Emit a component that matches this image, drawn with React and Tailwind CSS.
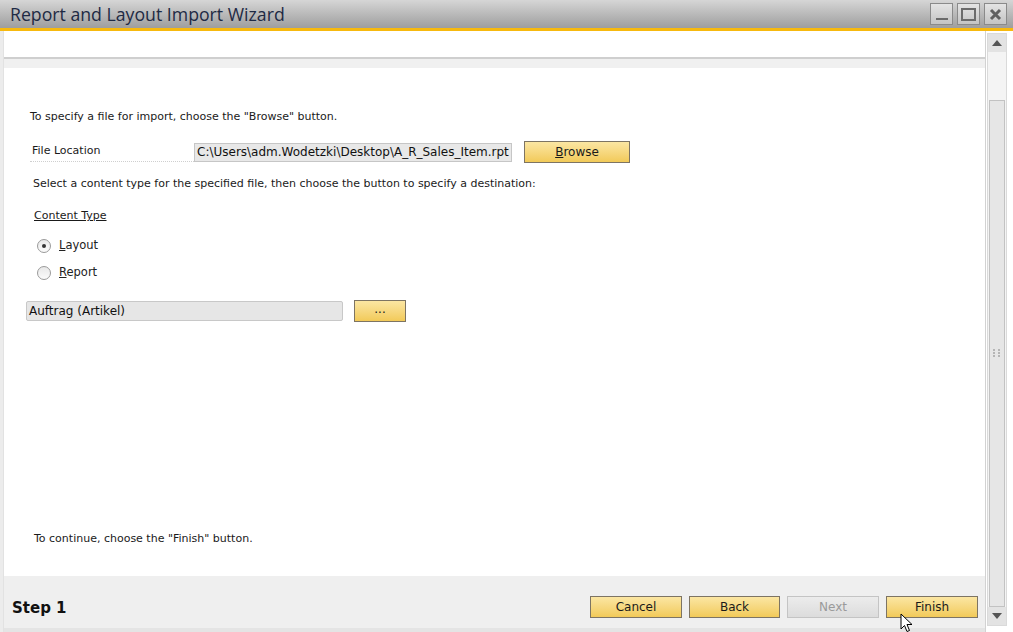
import { useState } from "react";

const font = { fontFamily: "Tahoma, 'DejaVu Sans', 'Liberation Sans', sans-serif" };

function YellowButton({ children, className = "", disabled = false }) {
  return (
    <button
      type="button"
      className={`h-[22px] border text-[12px] flex items-center justify-center ${
        disabled
          ? "border-[#c4c4c4] bg-gradient-to-b from-[#ececec] to-[#dcdcdc] text-[#9a9a9a]"
          : "border-[#7d7463] bg-gradient-to-b from-[#fbe6a2] to-[#f2ca58] text-[#1a1a1a]"
      } ${className}`}
    >
      {children}
    </button>
  );
}

function Radio({ checked, label, accel }) {
  return (
    <label className="flex items-center gap-[8px] h-[18px]">
      <span className="w-[14px] h-[14px] rounded-full border border-[#9a9a9a] bg-gradient-to-b from-[#e8e8e8] to-[#fbfbfb] flex items-center justify-center">
        {checked && <span className="w-[4px] h-[4px] rounded-full bg-[#333]" />}
      </span>
      <span className="text-[11.5px] text-[#222]">
        <span className="underline">{accel}</span>
        {label}
      </span>
    </label>
  );
}

export default function App() {
  const [type, setType] = useState("layout");

  return (
    <div className="w-[1013px] h-[632px] flex flex-col bg-white overflow-hidden relative" style={font}>
      {/* title bar */}
      <div className="h-[28px] flex items-center justify-between bg-gradient-to-b from-[#d6d6d6] to-[#9e9e9e] pl-[10px] pr-[6px]">
        <span className="text-[17.7px] text-[#1e2a44]" style={{ fontFamily: "'Open Sans', 'Noto Sans', sans-serif" }}>
          Report and Layout Import Wizard
        </span>
        <div className="flex gap-[4px]">
          <div className="w-[23px] h-[22px] border border-[#8a8a8a] bg-gradient-to-b from-[#e4e4e4] to-[#c4c4c4] flex items-end justify-center pb-[4px]">
            <span className="w-[12px] h-[2px] bg-[#6b6b6b]" />
          </div>
          <div className="w-[23px] h-[22px] border border-[#8a8a8a] bg-gradient-to-b from-[#e4e4e4] to-[#c4c4c4] flex items-center justify-center">
            <span className="w-[15px] h-[13px] border-2 border-[#6b6b6b]" />
          </div>
          <div className="w-[23px] h-[22px] border border-[#8a8a8a] bg-gradient-to-b from-[#e4e4e4] to-[#c4c4c4] flex items-center justify-center">
            <svg width="13" height="13" viewBox="0 0 13 13">
              <path d="M2 2 L11 11 M11 2 L2 11" stroke="#5f5f5f" strokeWidth="3" />
            </svg>
          </div>
        </div>
      </div>
      <div className="h-[3px] bg-[#f7b90e]" />

      {/* body */}
      <div className="flex-1 flex min-h-0">
        <div className="w-[4px] bg-[#ececec] border-r border-[#e2e2e2]" />
        <div className="flex-1 flex flex-col min-w-0">
          <div className="h-[26px] bg-white" />
          <div className="h-[2px] bg-[#cfcfcf]" />
          <div className="h-[9px] bg-[#f0f0f0]" />

          <div className="flex-1 flex flex-col text-[11px] text-[#1a1a1a] pl-[26px]">
            <p className="mt-[41px] leading-[16px]">To specify a file for import, choose the "Browse" button.</p>

            <div className="mt-[16px] flex items-center">
              <div className="w-[164px] h-[20px] border-b border-dotted border-[#cfcfcf] pl-[2px] flex items-center">File Location</div>
              <div className="w-[318px] h-[19px] bg-[#e8e8e8] border border-[#c6c6c6] flex items-center pl-[2px] text-[12px] text-[#111]">
                C:\Users\adm.Wodetzki\Desktop\A_R_Sales_Item.rpt
              </div>
              <YellowButton className="ml-[12px] w-[106px]">
                <span><span className="underline">B</span>rowse</span>
              </YellowButton>
            </div>

            <p className="mt-[13px] pl-[3px] leading-[16px]">
              Select a content type for the specified file, then choose the button to specify a destination:
            </p>

            <p className="mt-[16px] pl-[4px] leading-[16px] underline">Content Type</p>

            <div className="mt-[13px] pl-[7px] flex flex-col gap-[9px]">
              <div onClick={() => setType("layout")}>
                <Radio checked={type === "layout"} accel="L" label="ayout" />
              </div>
              <div onClick={() => setType("report")}>
                <Radio checked={type === "report"} accel="R" label="eport" />
              </div>
            </div>

            <div className="mt-[18px] ml-[-4px] flex items-center">
              <div className="w-[317px] h-[20px] bg-[#e6e6e6] border border-[#c8c8c8] rounded-[2px] flex items-center pl-[2px] text-[12px] text-[#111]">
                Auftrag (Artikel)
              </div>
              <YellowButton className="ml-[11px] w-[52px] h-[20px] pb-[4px]">...</YellowButton>
            </div>

            <div className="flex-1" />
            <p className="mb-[29px] pl-[4px] leading-[16px]">To continue, choose the "Finish" button.</p>
          </div>

          {/* footer */}
          <div className="h-[52px] bg-[#efefef] flex items-center justify-between pl-[8px] pr-[7px] pt-[14px]">
            <span className="text-[15px] font-bold text-[#111] pb-[2px]" style={{ fontFamily: "Verdana, 'DejaVu Sans', sans-serif" }}>Step 1</span>
            <div className="flex gap-[7px] pb-[4px]">
              <YellowButton className="w-[92px]">Cancel</YellowButton>
              <YellowButton className="w-[91px]">Back</YellowButton>
              <YellowButton className="w-[92px]" disabled>Next</YellowButton>
              <YellowButton className="w-[92px]">Finish</YellowButton>
            </div>
          </div>
          <div className="h-[4px] bg-[#e4e4e4]" />
        </div>

        {/* scrollbar */}
        <div className="w-[28px] flex flex-col bg-white pt-[2px] pb-[6px] pl-[1px] pr-[6px] border-l border-[#d2d2d2]">
          <div className="flex-1 flex flex-col bg-[#f4f4f4] border border-[#dadada]">
            <div className="h-[18px] bg-[#e3e3e3] flex items-center justify-center">
              <svg width="10" height="6" viewBox="0 0 10 6"><path d="M0 6 L5 0 L10 6 Z" fill="#555" /></svg>
            </div>
            <div className="h-[48px]" />
            <div className="flex-1 mx-[1px] bg-[#e6e6e6] border border-[#c2c2c2] flex items-center justify-center">
              <svg width="8" height="9" viewBox="0 0 8 9">
                <g fill="#b5b5b5">
                  <rect x="0" y="0" width="2" height="2" /><rect x="5" y="0" width="2" height="2" />
                  <rect x="0" y="3" width="2" height="2" /><rect x="5" y="3" width="2" height="2" />
                  <rect x="0" y="6" width="2" height="2" /><rect x="5" y="6" width="2" height="2" />
                </g>
              </svg>
            </div>
            <div className="h-[18px] bg-[#e3e3e3] flex items-center justify-center">
              <svg width="10" height="6" viewBox="0 0 10 6"><path d="M0 0 L5 6 L10 0 Z" fill="#555" /></svg>
            </div>
          </div>
        </div>
      </div>

      {/* mouse cursor */}
      <svg className="absolute left-[900px] top-[613px]" width="14" height="20" viewBox="0 0 14 20">
        <path d="M1 1 L1 16 L4.5 12.5 L7 18.5 L9.5 17.5 L7 11.5 L12 11.5 Z" fill="#fff" stroke="#000" strokeWidth="1" />
      </svg>
    </div>
  );
}
